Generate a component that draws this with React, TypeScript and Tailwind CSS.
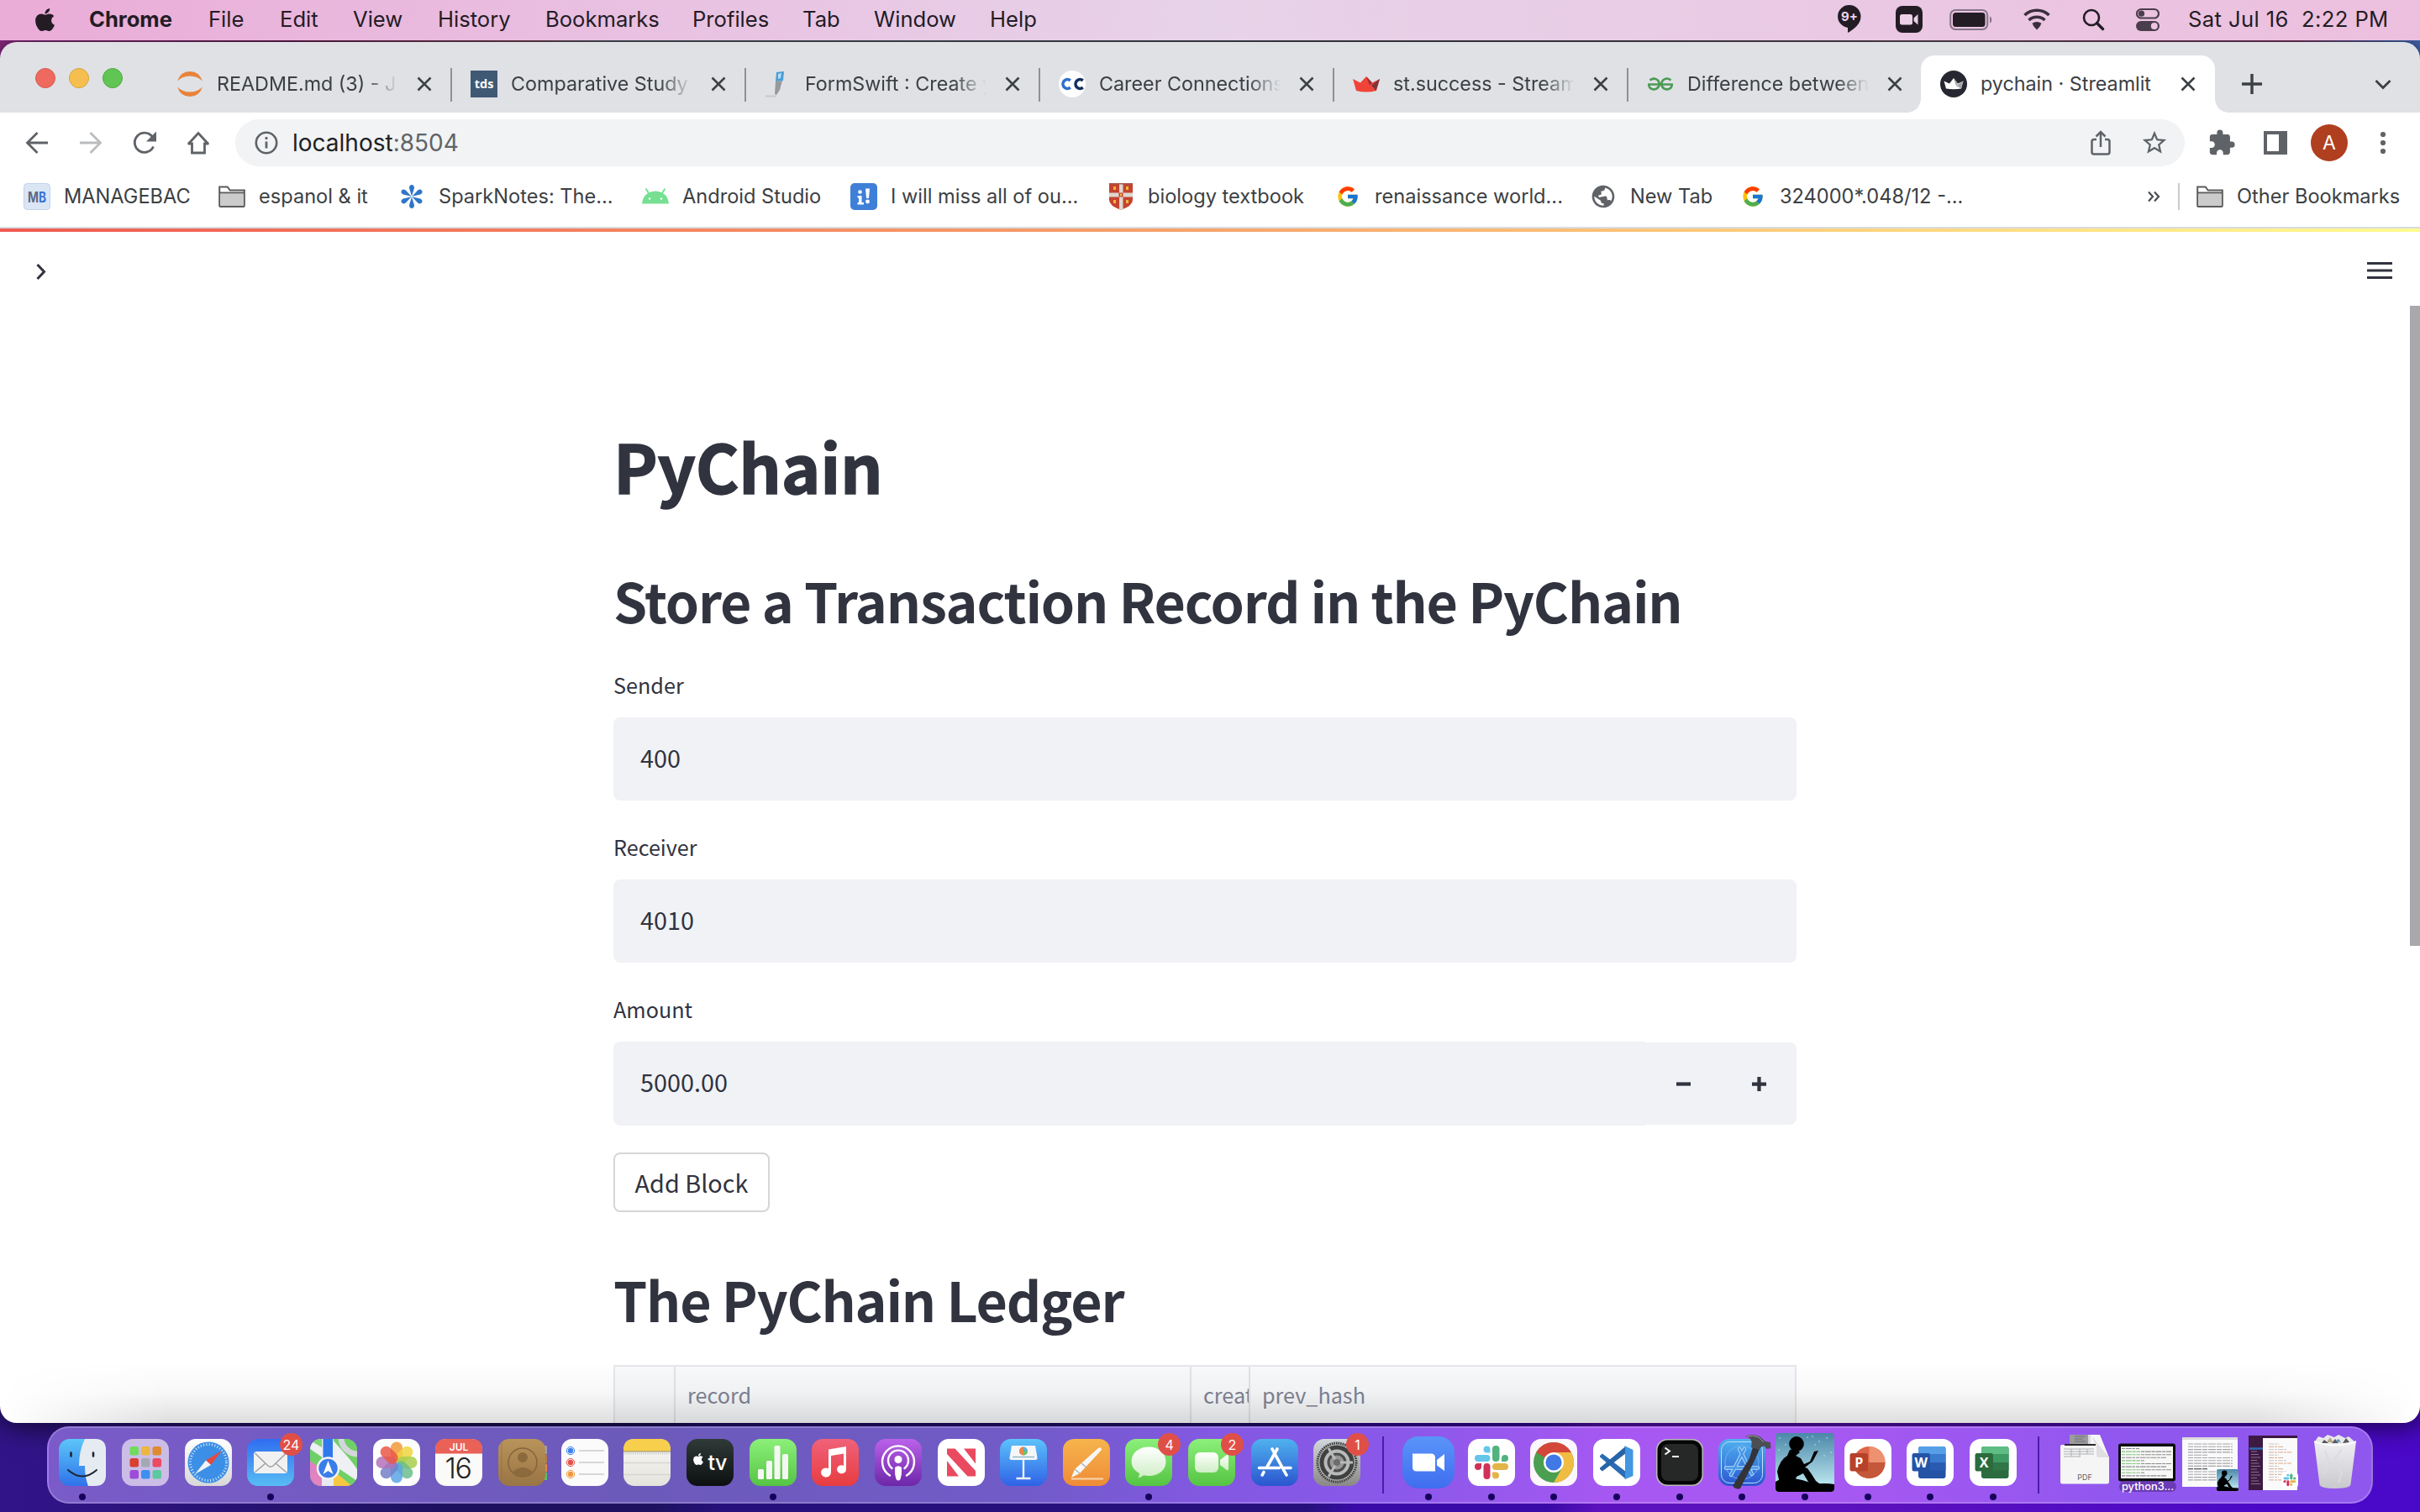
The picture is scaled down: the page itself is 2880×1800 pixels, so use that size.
import type { ReactNode } from "react";
import { FaApple } from "react-icons/fa";
import { FcGoogle } from "react-icons/fc";
import { SiGeeksforgeeks } from "react-icons/si";
import { MdExtension, MdStarBorder, MdPublic } from "react-icons/md";

/* ---------- shared ---------- */

const Svg = ({ children, size = 56, box = 56, className = "" }: { children: ReactNode; size?: number; box?: number; className?: string }) => (
  <svg width={size} height={size} viewBox={`0 0 ${box} ${box}`} fill="none" className={`shrink-0 overflow-visible ${className}`}>
    {children}
  </svg>
);

/* ---------- macOS menu bar ---------- */

const menus = [
  { label: "Chrome", w: "w-[142px] font-bold" },
  { label: "File", w: "w-[85px]" },
  { label: "Edit", w: "w-[87px]" },
  { label: "View", w: "w-[101px]" },
  { label: "History", w: "w-[128px]" },
  { label: "Bookmarks", w: "w-[175px]" },
  { label: "Profiles", w: "w-[131px]" },
  { label: "Tab", w: "w-[85px]" },
  { label: "Window", w: "w-[138px]" },
  { label: "Help", w: "w-[80px]" },
];

function MenuBar() {
  return (
    <header className="relative z-10 flex h-12 shrink-0 items-center bg-linear-to-r from-[#eaacd8] via-[#e7d3e9] to-[#ecbfde] pb-px pr-[37px] text-[25.600px] text-[#231c25]">
      <FaApple className="ml-[38px] mr-[37px] size-[31px] shrink-0" />
      {menus.map((m) => (
        <span key={m.label} className={`shrink-0 whitespace-nowrap ${m.w}`}>{m.label}</span>
      ))}
      <div className="ml-auto flex items-center">
        <Svg size={36} box={36} className="mr-[36px]">
          <path d="M18 1a13.500 13.500 0 0 0-2 26.900V34c7-4 15.500-10 15.500-19.500A13.500 13.500 0 0 0 18 1z" fill="#231c25" />
          <text x="18" y="20" fontSize="15" fontWeight="700" fill="#efd2e8" textAnchor="middle">9+</text>
        </Svg>
        <Svg size={34} box={34} className="mr-[31px]">
          <rect x="1" y="1" width="32" height="32" rx="8" fill="#231c25" />
          <rect x="6" y="11" width="15" height="12.500" rx="2.500" fill="#ecd0e7" />
          <path d="M22.500 15.500l5-4.500v12.500l-5-4.500z" fill="#ecd0e7" />
        </Svg>
        <Svg size={52} box={52} className="-my-3 mr-[35px]">
          <rect x="1.200" y="15" width="44" height="23" rx="6" stroke="#86748a" strokeWidth="2" />
          <rect x="4" y="18" width="38.500" height="17" rx="3.500" fill="#231c25" />
          <path d="M48 22.500c3 .8 3 7.200 0 8z" fill="#86748a" />
        </Svg>
        <Svg size={34} box={34} className="mr-[36px]">
          <path d="M2.500 12a21 21 0 0 1 29 0M7.500 18a14 14 0 0 1 19 0M12.500 23.500a7 7 0 0 1 9 0" stroke="#3a2e3c" strokeWidth="3.600" />
          <path d="M12.500 24.500a7 7 0 0 1 9 0L17 29.500z" fill="#3a2e3c" />
        </Svg>
        <Svg size={28} box={28} className="mr-[36px]">
          <circle cx="12" cy="12" r="9" stroke="#231c25" strokeWidth="2.600" />
          <path d="M18.500 18.500l7 7" stroke="#231c25" strokeWidth="3.400" strokeLinecap="round" />
        </Svg>
        <Svg size={30} box={30} className="mr-[33px]">
          <rect x="2" y="3" width="26" height="10.500" rx="5.250" stroke="#4a3d4c" strokeWidth="2.200" />
          <circle cx="7.500" cy="8.200" r="3.600" fill="#4a3d4c" />
          <rect x="1" y="17" width="28" height="12" rx="6" fill="#4a3d4c" />
          <circle cx="22.800" cy="23" r="4" fill="#ecc6e1" />
        </Svg>
        <span className="w-[239px] whitespace-pre tracking-[0.400px]">Sat Jul 16  2:22 PM</span>
      </div>
    </header>
  );
}

/* ---------- Chrome tab strip ---------- */

const tabs = [
  {
    title: "README.md (3) - Jupyter",
    icon: (
      <Svg size={32} box={32}>
        <path d="M1 12.500Q5 1 16 1t15 11.500Q25 6.500 16 6.500T1 12.500zM1 19.500Q5 31 16 31t15-11.500Q25 25.500 16 25.500T1 19.500z" fill="#e8833a" />
      </Svg>
    ),
  },
  {
    title: "Comparative Study of",
    icon: (
      <Svg size={32} box={32}>
        <rect width="32" height="32" fill="#3f5974" />
        <text x="16" y="21" fontSize="14.500" fontWeight="700" fontFamily="Open Sans" fill="#fff" textAnchor="middle">tds</text>
      </Svg>
    ),
  },
  {
    title: "FormSwift : Create your",
    icon: (
      <Svg size={32} box={32}>
        <path d="M14 2l9-1-1 11-9 1z" fill="#4a9fd6" />
        <path d="M16 4l4-1-1 6-3 1z" fill="#b7dcf1" />
        <path d="M13 13l8-1-3 11-4 6-2-1z" fill="#97999c" />
        <path d="M1 29.500h13v2H1z" fill="#c7c8ca" />
      </Svg>
    ),
  },
  {
    title: "Career Connections",
    icon: (
      <Svg size={32} box={32}>
        <circle cx="16" cy="16" r="16" fill="#fff" />
        <path d="M13.800 11.800a5.400 5.400 0 1 0 0 8.400" stroke="#2f6fd0" strokeWidth="3.600" />
        <path d="M28.800 11.800a5.400 5.400 0 1 0 0 8.400" stroke="#12305f" strokeWidth="3.600" />
      </Svg>
    ),
  },
  {
    title: "st.success - Streamlit",
    icon: (
      <Svg size={32} box={32}>
        <path d="M0 10l9 4.500L16 7l7 7.500 9-4.500-4 14q-12 3-24 0z" fill="#f04438" />
        <path d="M16 7l7 7.500-3 3z" fill="#9a2f35" />
        <path d="M32 10l-10 7.500L27.500 24z" fill="#7d353b" />
      </Svg>
    ),
  },
  {
    title: "Difference between",
    icon: <SiGeeksforgeeks className="size-8 shrink-0 p-px text-[#4c9a55]" />,
  },
  {
    title: "pychain · Streamlit",
    active: true,
    icon: (
      <Svg size={32} box={32}>
        <circle cx="16" cy="16" r="16" fill="#262730" />
        <path d="M4.500 12.500l6.500 3L16 9l5 6.500 6.500-3L25 21.500q-9 1.500-18 0z" fill="#fff" />
        <path d="M16 9l5 6.500-2 2.500zM27.500 12.500L19 18l6 3.500z" fill="#a3a4a9" />
      </Svg>
    ),
  },
];

const Close = () => (
  <Svg size={20} box={20}>
    <path d="M2.500 2.500l15 15M17.500 2.500l-15 15" stroke="#3c4043" strokeWidth="2.600" />
  </Svg>
);

function TabStrip() {
  return (
    <div className="flex h-[84px] shrink-0 items-end bg-[#dfe1e5]">
      <div className="flex h-[68px] w-[187px] shrink-0 items-start gap-4 pl-[42px] pt-[15px]">
        <i className="size-6 rounded-full border border-[#d8594f] bg-[#ee6a5f]" />
        <i className="size-6 rounded-full border border-[#d9a23d] bg-[#f5bf4f]" />
        <i className="size-6 rounded-full border border-[#50a73f] bg-[#61c554]" />
      </div>
      {tabs.map((t, i) => (
        <div
          key={t.title}
          className={`relative flex h-[68px] w-[350px] shrink-0 items-center pl-[23px] ${t.active ? "-ml-px rounded-t-[16px] bg-white" : ""}`}
        >
          {t.icon}
          <span
            className={`ml-4 w-[216px] overflow-hidden whitespace-nowrap text-[23.300px] text-[#3c4043] ${
              t.active ? "" : "[mask-image:linear-gradient(to_right,black_82%,transparent)]"
            }`}
          >
            {t.title}
          </span>
          <span className="ml-[21px]"><Close /></span>
          {!t.active && i < 5 && <i className="absolute right-[-1px] top-[15px] h-10 w-[2px] bg-[#8d9094]" />}
          {t.active && (
            <>
              <i className="absolute -left-4 bottom-0 size-4 bg-[radial-gradient(circle_at_0_0,transparent_15.500px,white_16px)]" />
              <i className="absolute -right-4 bottom-0 size-4 bg-[radial-gradient(circle_at_100%_0,transparent_15.500px,white_16px)]" />
            </>
          )}
        </div>
      ))}
      <div className="flex h-[68px] flex-1 items-center justify-between pl-[32px] pr-[34px]">
        <Svg size={24} box={24}><path d="M12 0v24M0 12h24" stroke="#3c4043" strokeWidth="3.400" /></Svg>
        <Svg size={20} box={20}><path d="M1.500 6l8.500 8.500L18.500 6" stroke="#3c4043" strokeWidth="2.800" /></Svg>
      </div>
    </div>
  );
}

/* ---------- Chrome toolbar ---------- */

function Toolbar() {
  return (
    <div className="flex h-[72px] shrink-0 items-center bg-white">
      <div className="flex w-[280px] shrink-0 items-center gap-8 pl-7">
        <Svg size={32} box={32}><path d="M29 16H5M16.500 4L4.500 16l12 12" stroke="#5f6368" strokeWidth="2.800" /></Svg>
        <Svg size={32} box={32}><path d="M3 16h24M15.500 4l12 12-12 12" stroke="#babcbe" strokeWidth="2.800" /></Svg>
        <Svg size={32} box={32}>
          <path d="M26.500 20.500A11.600 11.600 0 1 1 25 8.500" stroke="#5f6368" strokeWidth="2.900" />
          <path d="M30 2.500v12H18z" fill="#5f6368" />
        </Svg>
        <Svg size={32} box={32}><path d="M3.500 17h5v11h15V17h5M4 17.500L16 4.500l12 13" stroke="#5f6368" strokeWidth="2.800" /></Svg>
      </div>
      <div className="flex h-14 w-[2320px] shrink-0 items-center rounded-full bg-[#f1f3f4] pl-[22px] pr-[19px]">
        <Svg size={30} box={30}>
          <circle cx="15" cy="15" r="12.200" stroke="#5f6368" strokeWidth="2.600" />
          <path d="M15 13.500v8M15 8v3" stroke="#5f6368" strokeWidth="2.800" />
        </Svg>
        <span className="ml-[16px] text-[28px] text-[#202124]">
          localhost<span className="text-[#5f6368]">:8504</span>
        </span>
        <Svg size={32} box={32} className="ml-auto mr-[31px]">
          <path d="M11 12H8q-2.500 0-2.500 2.500v12.500q0 2.500 2.500 2.500h16q2.500 0 2.500-2.500V14.500q0-2.500-2.500-2.500h-3M16 21V3.500M10.500 8.500L16 3l5.500 5.500" stroke="#5f6368" strokeWidth="2.500" />
        </Svg>
        <MdStarBorder className="size-[34px] text-[#5f6368]" />
      </div>
      <MdExtension className="ml-[27px] size-[34px] shrink-0 text-[#5f6368]" />
      <Svg size={28} box={28} className="ml-[33px]">
        <path fillRule="evenodd" d="M0 0h28v28H0zM4 4v20h14V4z" fill="#5f6368" />
      </Svg>
      <div className="ml-[28px] flex size-11 shrink-0 items-center justify-center rounded-full bg-[#af3f1f] text-[23px] text-white">A</div>
      <Svg size={32} box={32} className="ml-[26px]">
        <g fill="#5f6368"><circle cx="16" cy="6" r="3.100" /><circle cx="16" cy="16" r="3.100" /><circle cx="16" cy="26" r="3.100" /></g>
      </Svg>
    </div>
  );
}

/* ---------- bookmarks ---------- */

const Folder = () => (
  <Svg size={32} box={32}>
    <path d="M1.200 27V4.500h9.500l3 4H30.800V27q0 1-1 1H2.200q-1 0-1-1z" fill="#fff" stroke="#5b5b5d" strokeWidth="2" />
    <path d="M2 13h28v14H2z" fill="#cbcbcb" />
    <path d="M1 11.500h30" stroke="#5b5b5d" strokeWidth="2" />
  </Svg>
);

const bookmarks: { label: string; w: string; icon: ReactNode }[] = [
  {
    label: "MANAGEBAC",
    w: "w-[232px]",
    icon: (
      <Svg size={32} box={32}>
        <rect x=".5" y=".5" width="31" height="31" rx="4" fill="#dbe6f5" stroke="#c0d2ec" />
        <text x="5" y="22.500" fontSize="17" fontWeight="700" fill="#5c6a86" textLength="13" lengthAdjust="spacingAndGlyphs">M</text>
        <text x="18" y="22.500" fontSize="17" fontWeight="700" fill="#3b74d6" textLength="9" lengthAdjust="spacingAndGlyphs">B</text>
      </Svg>
    ),
  },
  { label: "espanol & it", w: "w-[214px]", icon: <Folder /> },
  {
    label: "SparkNotes: The...",
    w: "w-[290px]",
    icon: (
      <Svg size={32} box={32}>
        <g fill="#2f76c9">
          {[0, 60, 120, 180, 240, 300].map((a) => (
            <path key={a} d="M16 15.500L13 6q0-4 3-4t3 4z" transform={`rotate(${a} 16 16)`} />
          ))}
        </g>
      </Svg>
    ),
  },
  {
    label: "Android Studio",
    w: "w-[248px]",
    icon: (
      <Svg size={32} box={32}>
        <path d="M0 24.500Q1 15 8 11.500q8-4 16 0 7 3.500 8 13z" fill="#76df92" />
        <path d="M8 12L4.500 6.500M24 12l3.500-5.500" stroke="#76df92" strokeWidth="2" />
        <circle cx="9" cy="18.500" r="1.200" fill="#fff" /><circle cx="23" cy="18.500" r="1.200" fill="#fff" />
      </Svg>
    ),
  },
  {
    label: "I will miss all of ou...",
    w: "w-[306px]",
    icon: (
      <Svg size={32} box={32}>
        <rect width="32" height="32" rx="5" fill="#3f7fd8" />
        <circle cx="11.500" cy="10.500" r="2.300" fill="#fff" />
        <path d="M8.500 15h5v8h2.500v2.500H8.500V23h1.500v-5.500H8.500zM18 6.500h5l-1 11.500h-3z" fill="#fff" />
        <circle cx="20.500" cy="22" r="2.400" fill="#fff" />
      </Svg>
    ),
  },
  {
    label: "biology textbook",
    w: "w-[270px]",
    icon: (
      <Svg size={32} box={32}>
        <path d="M2 0h28v20q0 7-14 12Q2 27 2 20z" fill="#c5432f" />
        <path d="M14 0h4.500v31l-2.500 1-2-1zM2 11.500h28v5H2z" fill="#ddd6d0" />
        <path d="M2 .8h28" stroke="#a2584d" strokeWidth="1.600" />
        <path d="M13.500 11.500h5v5h-5z" fill="#c5432f" />
        <g fill="#f0b63d"><path d="M7 4h3v4H7zM22 4h3v4h-3zM7 20h3v4H7zM22 20h3v4h-3zM15 12.500h2v3h-2z" /></g>
      </Svg>
    ),
  },
  { label: "renaissance world...", w: "w-[304px]", icon: <FcGoogle className="size-8 shrink-0 p-[2px]" /> },
  { label: "New Tab", w: "w-[178px]", icon: <MdPublic className="size-8 shrink-0 -rotate-12 text-[#5f6368]" /> },
  { label: "324000*.048/12 -...", w: "w-[280px]", icon: <FcGoogle className="size-8 shrink-0 p-[2px]" /> },
];

function BookmarksBar() {
  return (
    <div className="flex h-[64px] shrink-0 items-center bg-white pl-7 pb-[8px] text-[23.600px] text-[#3c4043]">
      {bookmarks.map((b) => (
        <div key={b.label} className={`flex shrink-0 items-center gap-[16px] whitespace-nowrap ${b.w}`}>
          {b.icon}
          {b.label}
        </div>
      ))}
      <div className="ml-auto flex items-center pr-[22px]">
        <Svg size={16} box={16} className="mr-[21px]">
          <path d="M2 2.500L7 8l-5 5.500M9 2.500L14 8l-5 5.500" stroke="#4a4d50" strokeWidth="2.200" />
        </Svg>
        <i className="mr-[20px] h-8 w-[2px] bg-[#c9cbce]" />
        <Folder />
        <span className="ml-[16px] w-[196px] whitespace-nowrap">Other Bookmarks</span>
      </div>
    </div>
  );
}

/* ---------- Streamlit page ---------- */

const Field = ({ label, children }: { label: string; children: ReactNode }) => (
  <div className="flex h-[193px] flex-col">
    <label className="flex h-[59px] shrink-0 items-start text-[25.200px] leading-[40px]">{label}</label>
    {children}
  </div>
);

function Page() {
  return (
    <main className="relative flex flex-1 flex-col overflow-hidden bg-white font-['Noto_Sans_CJK_SC','Noto_Sans',sans-serif] text-[#31333f]">
      <div className="h-[2px] shrink-0 bg-[#dadbdd]" />
      <div className="h-1 shrink-0 bg-linear-to-r from-[#ef5a52] via-[#f6a46c] to-[#fdfb8f]" />
      <div className="flex h-[92px] shrink-0 items-center justify-between pl-[36px] pr-[33px]">
        <Svg size={24} box={24}><path d="M8.500 5l8 8.500-8 8.500" stroke="#31333f" strokeWidth="3" /></Svg>
        <Svg size={30} box={30}><path d="M0 6.500h30M0 15h30M0 23.500h30" stroke="#31333f" strokeWidth="3" /></Svg>
      </div>
      <div className="ml-[730px] flex w-[1408px] flex-col pt-[136px]">
        <h1 className="h-[160px] whitespace-nowrap text-[79.200px] font-bold leading-[100px] tracking-[-0.300px] [-webkit-text-stroke:1.400px_#31333f]">PyChain</h1>
        <h2 className="h-[131px] whitespace-nowrap text-[64.500px] font-bold leading-[100px] tracking-[-1.220px]">
          Store a Transaction Record in the PyChain
        </h2>
        <Field label="Sender">
          <div className="h-[99px] rounded-lg bg-[#f0f2f6] pl-8 text-[28.800px] leading-[95px]">400</div>
        </Field>
        <Field label="Receiver">
          <div className="h-[99px] rounded-lg bg-[#f0f2f6] pl-8 text-[28.800px] leading-[95px]">4010</div>
        </Field>
        <Field label="Amount">
          <div className="flex h-[100px] shrink-0 items-center">
            <div className="h-[100px] w-[1228px] rounded-l-lg bg-[#f0f2f6] pl-8 text-[28.800px] leading-[95px]">5000.00</div>
            <div className="flex h-[98px] w-[180px] items-center gap-[73px] rounded-r-lg bg-[#f0f2f6] pl-[37px]">
              <Svg size={17} box={16}><path d="M0 8h16" stroke="#31333f" strokeWidth="4" /></Svg>
              <Svg size={17} box={16}><path d="M0 8h16M8 0v16" stroke="#31333f" strokeWidth="4" /></Svg>
            </div>
          </div>
        </Field>
        <button className="-mt-[2px] mb-[53px] h-[71px] w-[186px] self-start rounded-lg border-2 border-[#d6d6d9] bg-white text-[28.800px] leading-[62px]">Add Block</button>
        <h2 className="h-[129px] shrink-0 whitespace-nowrap text-[64.500px] font-bold leading-[100px] tracking-[-1.220px]">The PyChain Ledger</h2>
        <div className="grid h-[90px] shrink-0 grid-cols-[72px_614px_70px_652px] border-2 border-b-0 border-[#e6e7ea] bg-[#f8f9fb] text-[25.200px] leading-[66px] text-[#808495] *:overflow-hidden *:border-r-2 *:border-[#e2e3e6]">
          <div />
          <div className="pl-[14px]">record</div>
          <div className="pl-[14px]">created</div>
          <div className="border-r-0! pl-[14px]">prev_hash</div>
        </div>
      </div>
      <i className="absolute right-0 top-[94px] h-[762px] w-[12px] bg-[#a9a9ad]" />
      <i className="absolute inset-x-0 bottom-0 h-[72px] bg-linear-to-b from-transparent via-black/3 to-black/13 [mask-image:linear-gradient(to_right,transparent,black_7%,black_93%,transparent)]" />
    </main>
  );
}

/* ---------- dock ---------- */

type App = { id: string; art: ReactNode; dot?: boolean; badge?: string };

const Tile = ({ fill }: { fill: string }) => <rect width="56" height="56" rx="13" fill={fill} />;

const Defs = () => (
  <svg width="0" height="0" className="absolute">
    <defs>
      {[
        ["finder", "#5cc6f8", "#2f73ea"],
        ["mail", "#2f6df0", "#58bdf4"],
        ["green", "#8cf07a", "#55c443"],
        ["red", "#f0627a", "#e73c40"],
        ["purple", "#bb62ea", "#6d27a8"],
        ["blue", "#5cc2fb", "#2f62e6"],
        ["orange", "#f6b54d", "#ef8b36"],
        ["store", "#4fb2ee", "#2b55d0"],
        ["zoom", "#5a95f9", "#3f6df0"],
        ["grey", "#d3d8dd", "#8a8885"],
        ["tv", "#2f3a38", "#0d1011"],
        ["white", "#ffffff", "#d8d8d8"],
        ["contact", "#b8935a", "#9a7545"],
        ["cream", "#f8f8f6", "#e4e3dc"],
        ["bubble", "#ffffff", "#cfeec5"],
        ["sky", "#4b87a8", "#c8f2f8"],
        ["bin", "#efeff2", "#c9c9cd"],
      ].map(([id, a, b]) => (
        <linearGradient key={id} id={id} x1="0" y1="0" x2="0" y2="1">
          <stop stopColor={a} />
          <stop offset="1" stopColor={b} />
        </linearGradient>
      ))}
      <clipPath id="tile"><rect width="56" height="56" rx="13" /></clipPath>
    </defs>
  </svg>
);

const Reader = () => (
  <g>
    <g fill="#dff3f8">
      {[[5, 6], [12, 14], [4, 20], [44, 4], [52, 10], [61, 6], [66, 23], [58, 27], [38, 5], [47, 14]].map(([x, y]) => (
        <circle key={`${x}-${y}`} cx={x} cy={y} r=".7" />
      ))}
    </g>
    <g fill="#000">
      <ellipse cx="25" cy="13" rx="8.800" ry="9" />
      <path d="M17 20l8-1 4 4-5 4 6 3 4 7 7-3 5-12 5-1-7 13-4 3-5 4 3 1 5 7 5 8 8 6-13 2-10-17-8 4-2 6-9 5-9-3-3-14Q5 32 14 27z" />
      <path d="M0 70V58q9-5 18-4 16 1 27 7 14-2 25 0v5q0 4-4 4H4q-4 0-4-4z" />
    </g>
  </g>
);

const SlackMark = () => (
  <g>
    <g fill="#65c5ea"><rect x="8" y="19" width="18.500" height="8" rx="4" /><path d="M26.500 16.500h-4a4 4 0 1 1 4-4z" /></g>
    <g fill="#53b27e"><rect x="29" y="8" width="8.500" height="19" rx="4" /><path d="M40 27v-4a4 4 0 1 1 4 4z" /></g>
    <g fill="#e2b549"><rect x="29" y="29" width="19" height="8" rx="4" /><path d="M29 39.500h4a4 4 0 1 1-4 4z" /></g>
    <g fill="#cf3157"><rect x="18.500" y="29" width="8" height="19" rx="4" /><path d="M16 29v4a4 4 0 1 1-4-4z" /></g>
  </g>
);

const Office = ({ letter, a, b, c, d, round }: { letter: string; a: string; b: string; c: string; d: string; round?: boolean }) => (
  <Svg>
    <Tile fill="#fff" />
    {round ? (
      <g>
        <circle cx="29.500" cy="28" r="19" fill={b} />
        <path d="M29.500 9a19 19 0 0 1 19 19h-19z" fill={a} />
        <path d="M10.500 28h38a19 19 0 0 1-38 0z" fill={c} />
      </g>
    ) : (
      <g>
        <rect x="14" y="9" width="32.500" height="38" rx="3" fill={d} />
        <path d="M14 18.500V12q0-3 3-3h26.500q3 0 3 3v6.500z" fill={a} />
        <path d="M14 18.500h32.500V28H14z" fill={b} />
        <path d="M14 28h32.500v9.500H14z" fill={c} />
      </g>
    )}
    <rect x="6.500" y="17" width="21.500" height="21.500" rx="2.500" fill={d} />
    <text x="17.200" y="33.500" fontSize="16" fontWeight="700" fill="#fff" textAnchor="middle" fontFamily="Open Sans">{letter}</text>
  </Svg>
);

const lines = (n: number) => Array.from({ length: n }, (_, i) => i);

const mainApps: App[] = [
  {
    id: "Finder",
    dot: true,
    art: (
      <Svg>
        <Tile fill="url(#finder)" />
        <path d="M31 0q-7 14-7 32h7q0 14 4 24h8q13 0 13-13V13Q56 0 43 0z" fill="#e6ebf2" />
        <path d="M14.500 16.500v4M41 16.500v4" stroke="#1c2735" strokeWidth="2.600" strokeLinecap="round" />
        <path d="M11 37q17 15 34 0" stroke="#1c2735" strokeWidth="2" strokeLinecap="round" />
      </Svg>
    ),
  },
  {
    id: "Launchpad",
    art: (
      <Svg>
        <Tile fill="#cbbde6" />
        {["#6fdc5b", "#efb53f", "#e08a32", "#d9402f", "#a3a9b2", "#ea4a62", "#9d4bd8", "#3f8fee", "#5cc89e"].map((f, i) => (
          <rect key={f} x={9.500 + (i % 3) * 13.500} y={9 + Math.floor(i / 3) * 14} width="10.500" height="10.500" rx="2.500" fill={f} />
        ))}
      </Svg>
    ),
  },
  {
    id: "Safari",
    art: (
      <Svg>
        <Tile fill="url(#white)" />
        <circle cx="28" cy="28" r="24.500" fill="#3c8fe6" />
        <circle cx="28" cy="28" r="21.500" stroke="#d9ecfb" strokeWidth="3" strokeDasharray="1 2.380" />
        <path d="M44 14L25 25.500l6 5.500z" fill="#e6483d" />
        <path d="M12 42l13-16.500 6 5.500z" fill="#f1f3f5" />
      </Svg>
    ),
  },
  {
    id: "Mail",
    dot: true,
    badge: "24",
    art: (
      <Svg>
        <Tile fill="url(#mail)" />
        <rect x="8" y="15" width="40" height="26" rx="3.500" fill="#f1f1f2" />
        <path d="M9.500 17l15.500 15q3 2.500 6 0l15.500-15M9.500 39.500L22 29M46.500 39.500L34 29" stroke="#9d9ea2" strokeWidth="1.400" />
      </Svg>
    ),
  },
  {
    id: "Maps",
    art: (
      <Svg>
        <g clipPath="url(#tile)">
          <path d="M0 0h56v56H0z" fill="#6fd068" />
          <path d="M0 12l56 38v-16L26 0H0z" fill="#eff0f3" />
          <path d="M0 0h14v10L0 2z" fill="#7ad671" />
          <path d="M0 26l16 12v18H0z" fill="#e083c0" />
          <path d="M28 56V38l22 18z" fill="#f6c944" />
          <path d="M30 0h26v36z" fill="#6fd068" />
          <path d="M37-3a20 20 0 0 0 22 21" stroke="#d3d6da" strokeWidth="7" />
          <path d="M14 0h14v56H14z" fill="#e9eaee" />
          <path d="M15.500 0h11.500v30H15.500z" fill="#3079ea" />
        </g>
        <circle cx="21.500" cy="35" r="12.500" fill="#3a7de9" stroke="#f2f3f6" strokeWidth="2.500" />
        <path d="M21.500 26l6 16-6-4-6 4z" fill="#fff" />
      </Svg>
    ),
  },
  {
    id: "Photos",
    art: (
      <Svg>
        <Tile fill="#fdfdfd" />
        {["#f39a3a", "#eed53d", "#a8cf4c", "#6bbd8d", "#5aa6e6", "#7480c8", "#b172b8", "#ea5748"].map((f, i) => (
          <rect key={f} x="21" y="3.500" width="14" height="24" rx="7" fill={f} fillOpacity=".85" transform={`rotate(${i * 45} 28 28)`} />
        ))}
      </Svg>
    ),
  },
  {
    id: "Calendar",
    art: (
      <Svg>
        <Tile fill="#fafaf9" />
        <path d="M0 17.500V13Q0 0 13 0h30q13 0 13 13v4.500z" fill="#e96157" />
        <text x="28" y="13.500" fontSize="12" fontWeight="600" fill="#fff" textAnchor="middle">JUL</text>
        <text x="27" y="47" fontSize="34" fontWeight="300" fill="#242426" textAnchor="middle" letterSpacing="-1.500">16</text>
      </Svg>
    ),
  },
  {
    id: "Contacts",
    art: (
      <Svg>
        <path d="M54 8h3q1 0 1 1v9h-4z" fill="#9da1a6" /><path d="M54 19h4v10h-4z" fill="#b9783a" /><path d="M54 30h4v9h-4z" fill="#e8873a" /><path d="M54 40h4v9h-4z" fill="#5cc35a" />
        <Tile fill="url(#contact)" />
        <path d="M4 2v52" stroke="#8f6d3d" strokeWidth="1" opacity=".6" />
        <circle cx="29" cy="28" r="17" stroke="#86653a" strokeWidth="1.500" />
        <circle cx="29" cy="22" r="6" fill="#8b6a3d" />
        <path d="M17 39.500q12-11 24 0-12 11-24 0z" fill="#8b6a3d" />
      </Svg>
    ),
  },
  {
    id: "Reminders",
    art: (
      <Svg>
        <Tile fill="#fbfbfb" />
        {["#3c82ee", "#e3524a", "#ee9a3c"].map((f, i) => (
          <g key={f}>
            <circle cx="11" cy={14 + i * 14} r="3.200" fill={f} />
            <circle cx="11" cy={14 + i * 14} r="4.600" stroke={f} strokeWidth="1" />
            <path d={`M21 ${14 + i * 14}h30`} stroke="#cfcfd3" strokeWidth="1.600" />
          </g>
        ))}
      </Svg>
    ),
  },
  {
    id: "Notes",
    art: (
      <Svg>
        <Tile fill="url(#cream)" />
        <path d="M0 15V13Q0 0 13 0h30q13 0 13 13v2z" fill="#f8cf4c" />
        <path d="M0 15h56" stroke="#8e8a7c" strokeWidth="1" />
        <path d="M1 17.500h54" stroke="#c2c1bb" strokeWidth="2" strokeDasharray="1 1.500" />
        <path d="M0 28.500h56M0 42.500h56" stroke="#d7d6d1" strokeWidth="1.300" />
      </Svg>
    ),
  },
  {
    id: "TV",
    art: (
      <Svg>
        <Tile fill="url(#tv)" />
        <FaApple x={6} y={16} width={21} height={21} color="#fff" />
        <text x="25.500" y="36.500" fontSize="25" fontWeight="500" fill="#fff" letterSpacing="-.5">tv</text>
      </Svg>
    ),
  },
  {
    id: "Numbers",
    dot: true,
    art: (
      <Svg>
        <Tile fill="url(#green)" />
        <g fill="#f4f7f3">
          <rect x="10" y="36" width="7" height="12" rx="1.500" /><rect x="20" y="26" width="7" height="22" rx="1.500" />
          <rect x="29.500" y="8" width="7" height="40" rx="1.500" /><rect x="39" y="18" width="7" height="30" rx="1.500" />
        </g>
      </Svg>
    ),
  },
  {
    id: "Music",
    art: (
      <Svg>
        <Tile fill="url(#red)" />
        <path d="M20 12.500L41 9v27.500a5.500 5 0 1 1-3-4.700V17.500L23 20v20a6 5.500 0 1 1-3-4.800z" fill="#fff" />
      </Svg>
    ),
  },
  {
    id: "Podcasts",
    art: (
      <Svg>
        <Tile fill="url(#purple)" />
        <g stroke="#fff" strokeWidth="2.400" strokeLinecap="round">
          <path d="M18 43.500a19 19 0 1 1 20 0M20.500 35a12 12 0 1 1 15 0" />
        </g>
        <circle cx="28" cy="24.500" r="4.500" fill="#fff" />
        <path d="M24 34q4-3.500 8 0 .6 8-1.500 14-2.500 3-5 0Q23.500 42 24 34z" fill="#fff" />
      </Svg>
    ),
  },
  {
    id: "News",
    art: (
      <Svg>
        <Tile fill="#fff" />
        <path d="M11 11.500h9.500L45 38v6.500H35.500L11 18z" fill="#e94a5f" />
        <path d="M31 11.500h14v18zM11 26v18.500h14z" fill="#e94a5f" />
      </Svg>
    ),
  },
  {
    id: "Keynote",
    art: (
      <Svg>
        <Tile fill="url(#blue)" />
        <path d="M14 8h28l2.500 14q.4 3-2.500 3H14q-3 0-2.500-3z" fill="#f4f6f8" />
        <path d="M15 21.500h26" stroke="#8eb3c9" strokeWidth="1.300" />
        <circle cx="28" cy="14.500" r="5" fill="#58b2dc" /><path d="M28 9.500a5 5 0 0 0 0 10z" fill="#ea884a" /><path d="M28 14.500h5a5 5 0 0 1-5 5z" fill="#6cc35a" />
        <path d="M28 25v21M19.500 47h17" stroke="#eef1f4" strokeWidth="2.400" />
      </Svg>
    ),
  },
  {
    id: "Pages",
    art: (
      <Svg>
        <Tile fill="url(#orange)" />
        <path d="M10 46l4-10L42 11q4-2 4 2L20 41z" fill="#f7f7f7" />
        <path d="M14 36l6 5M22 29l6 5" stroke="#a9a9aa" strokeWidth="1.200" />
        <path d="M10 47.500h38" stroke="#f9d6ab" strokeWidth="2" />
      </Svg>
    ),
  },
  {
    id: "Messages",
    dot: true,
    badge: "4",
    art: (
      <Svg>
        <Tile fill="url(#green)" />
        <path d="M28 9.500c12 0 20.500 7.500 20.500 17.500S40 44 28 44q-3 0-6-.7-3 2.700-6.500 3.200 1.500-2.500 1.500-5.500Q7.500 36 7.500 27C7.500 17 16 9.500 28 9.500z" fill="url(#bubble)" />
      </Svg>
    ),
  },
  {
    id: "FaceTime",
    badge: "2",
    art: (
      <Svg>
        <Tile fill="url(#green)" />
        <rect x="8" y="16" width="28" height="24" rx="6" fill="url(#bubble)" />
        <path d="M38 25l8.500-6.500q1.500 0 1.500 2v15q0 2-1.500 2L38 31z" fill="url(#bubble)" />
      </Svg>
    ),
  },
  {
    id: "App Store",
    art: (
      <Svg>
        <Tile fill="url(#store)" />
        <path d="M25 12l14.500 26.500M31 12L18.500 34M9.500 34.500h24M39 34.500h8M15 39.500l-1.800 3.500M39.500 38.500l2.500 4.500" stroke="#fff" strokeWidth="3.600" strokeLinecap="round" />
      </Svg>
    ),
  },
  {
    id: "System Preferences",
    badge: "1",
    art: (
      <Svg>
        <Tile fill="url(#grey)" />
        <circle cx="28" cy="28" r="23" fill="#b9bab9" stroke="#3b3c3c" strokeWidth="3" strokeDasharray="1.600 1" />
        <circle cx="28" cy="28" r="18" stroke="#3f4040" strokeWidth="5" />
        <circle cx="28" cy="28" r="10" fill="#969796" stroke="#4b4c4c" strokeWidth="3" />
        <path d="M28 28h19M28 28l-10-17M28 28L18 45" stroke="#b9bab9" strokeWidth="3" />
        <circle cx="28" cy="28" r="4" fill="#6b6c6b" />
      </Svg>
    ),
  },
];

const openApps: App[] = [
  {
    id: "Zoom",
    dot: true,
    art: (
      <Svg>
        <rect x="-3" y="-3" width="62" height="62" rx="19" fill="url(#zoom)" />
        <path d="M9 17.500h22q5 0 5 5v16H14q-5 0-5-5zM38 25l9-7v20l-9-6.500z" fill="#fff" />
      </Svg>
    ),
  },
  { id: "Slack", dot: true, art: <Svg><Tile fill="#fff" /><SlackMark /></Svg> },
  {
    id: "Chrome",
    dot: true,
    art: (
      <Svg>
        <Tile fill="#fbf6fc" />
        <circle cx="28" cy="28" r="24" fill="#4a9f50" />
        <path d="M28 28L7.200 16A24 24 0 0 1 48.800 16z" fill="#d5463a" />
        <path d="M28 16h20.800A24 24 0 0 1 28 52l10.400-18z" fill="#f0bd42" />
        <circle cx="28" cy="28" r="12" fill="#fff" /><circle cx="28" cy="28" r="9.600" fill="#4079e6" />
      </Svg>
    ),
  },
  {
    id: "VS Code",
    dot: true,
    art: (
      <Svg>
        <Tile fill="#fff" />
        <path d="M8 20l3-2.500 28 21.500v9L8 21.500z" fill="#2b6cb5" />
        <path d="M8 36l3 2.500L39 17V8.500L8 34.500z" fill="#2664a8" />
        <path d="M37 8l10.500 5v31L37 48.500q1 0 1-2V10z" fill="#4296e2" />
      </Svg>
    ),
  },
  {
    id: "Terminal",
    dot: true,
    art: (
      <Svg>
        <Tile fill="#b8bab8" />
        <rect x="1.500" y="1.500" width="53" height="53" rx="12" fill="#050505" />
        <rect x="6" y="6" width="44" height="44" rx="8" fill="#262727" />
        <path d="M10.500 10.500l5.500 4-5.500 4M19 21h8" stroke="#fff" strokeWidth="1.900" />
      </Svg>
    ),
  },
  {
    id: "Xcode",
    dot: true,
    art: (
      <Svg>
        <Tile fill="url(#store)" />
        <rect x="3.500" y="3.500" width="49" height="49" rx="10" stroke="#bfe0fb" strokeWidth="1" />
        <circle cx="28" cy="28" r="20" stroke="#6fb4f0" strokeWidth="1" />
        <path d="M25 12l15 30M31 12L15 43M9 34.500h38" stroke="#b5dcfb" strokeWidth="4.400" strokeLinecap="round" />
        <path d="M25 12l15 30M31 12L15 43M9 34.500h38" stroke="#4a97e6" strokeWidth="2.600" strokeLinecap="round" />
        <path d="M37 23l4-13 8 2-6 14-17 33q-5 2-9-3z" fill="#33343a" />
        <path d="M32-3q8-4 17 0l7 6 6 1 .5 7-4.500 1-3-3q-4-1-6 4l-10-3q3-11-7-13z" fill="#4b4e52" />
        <path d="M34-3q8-2 14 1l6 6" stroke="#9a9da1" strokeWidth="1" />
      </Svg>
    ),
  },
  {
    id: "Kindle",
    dot: true,
    art: (
      <Svg size={70} box={70} className="-mt-[7px] mb-[-7px]">
        <rect width="70" height="70" rx="4" fill="url(#sky)" />
        <Reader />
      </Svg>
    ),
  },
  { id: "PowerPoint", dot: true, art: <Office letter="P" a="#ee9170" b="#dd6648" c="#c5573a" d="#b7412a" round /> },
  { id: "Word", dot: true, art: <Office letter="W" a="#569fe6" b="#3a7bd0" c="#2a5bb3" d="#2453a6" /> },
  { id: "Excel", dot: true, art: <Office letter="X" a="#5dbd83" b="#3f9b64" c="#2f7648" d="#2b6b3d" /> },
];

const files: App[] = [
  {
    id: "PDF",
    art: (
      <Svg>
        <path d="M10-5h36v26H10z" fill="#dcdcde" /><path d="M10-5h22v11H10z" fill="#9b9ca0" />
        <path d="M16-3h13M16 0h10M16 3h13" stroke="#6d6e72" strokeWidth="1" />
        <path d="M-1 9q0-2 2-2h34V-5h11l11 27v29q0 2.500-2.500 2.500H1.500Q-1 53.500-1 51z" fill="#f5f5f6" />
        <path d="M4 7h37" stroke="#2a2a2c" strokeWidth="2" />
        <path d="M35-5l22 27H45q-3 0-3-3V8z" fill="#dfdfe2" />
        <path d="M3 12h36M3 15h36M3 18h36M3 21h20M12 12v9M22 12v9M31 12v6" stroke="#a9aaad" strokeWidth=".9" />
        <text x="28" y="48.500" fontSize="9" fill="#626266" textAnchor="middle">PDF</text>
      </Svg>
    ),
  },
  {
    id: "Terminal window",
    art: (
      <Svg>
        <rect x="-6" y="5.500" width="68" height="45" rx="3" fill="#0c0d0e" />
        <rect x="-3" y="9" width="62" height="38" fill="#f7f7f6" />
        {lines(10).map((i) => (
          <g key={i} strokeWidth="1.100" strokeDasharray="4 .8 7 .8">
            <path d={`M-2 ${11.500 + i * 3.600}h${i % 3 ? 22 : 16}`} stroke={i % 3 ? "#85c47d" : "#8c8c8f"} />
            <path d={`M${i % 3 ? 21 : 15} ${11.500 + i * 3.600}h${i % 4 ? 36 : 4}`} stroke="#8c8c8f" />
          </g>
        ))}
        <rect x="-5" y="50.500" width="68" height="12.500" rx="6.250" fill="#6b3bb5" />
        <text x="29" y="60.500" fontSize="12.800" fontWeight="500" fill="#fff" textAnchor="middle">python3...</text>
      </Svg>
    ),
  },
  {
    id: "Kindle window",
    art: (
      <Svg>
        <rect x="-5" y="-2" width="66" height="59" fill="#fafafb" />
        <path d="M-5-2h66v3h-66z" fill="#dcdade" />
        {lines(14).map((i) => (
          <path key={i} d={`M2 ${6 + i * 3.300}h${i % 5 === 4 ? 24 : 53}`} stroke={i === 9 ? "#2a2a2c" : "#a4a4a8"} strokeWidth="1.100" strokeDasharray="6 1 9 1" />
        ))}
        <g transform="translate(36 36) scale(.37)"><rect width="70" height="70" rx="6" fill="url(#sky)" /><Reader /></g>
      </Svg>
    ),
  },
  {
    id: "Slack window",
    art: (
      <Svg>
        <path d="M-1-4h58v65H-1z" fill="#fafafa" /><path d="M-1-4h58v3H-1z" fill="#3b1640" /><path d="M-1-4h17v65H-1z" fill="#3c1a42" />
        <path d="M0 11.500h16" stroke="#2f6db5" strokeWidth="2.400" />
        {lines(12).map((i) => (
          <path key={i} d={`M2 ${15 + i * 3.500}h${7 + (i % 3) * 2}`} stroke="#8a6f90" strokeWidth="1" />
        ))}
        {lines(14).map((i) => (
          <path key={i} d={`M23 ${6 + i * 3.300}h${12 + (i % 4) * 5}`} stroke={i % 2 ? "#d9a98a" : "#c4c4c8"} strokeWidth="1" strokeDasharray="6 1 3 1" />
        ))}
        <rect x="38" y="39" width="20" height="20" rx="5" fill="#fff" />
        <g transform="translate(37.500 38.500) scale(.37)"><SlackMark /></g>
      </Svg>
    ),
  },
  {
    id: "Trash",
    art: (
      <Svg>
        <path d="M4 3l4-6 6 2 5-4 8 3 5-3 8 4 4-2 7 6q-23 11-47 0z" fill="#e8e8ea" />
        <path d="M12 5l3-4 5 4zM24 5l4-5 4 5zM37 5l4-6 4 5z" fill="#55565b" />
        <path d="M18 4l4-6 4 6z" fill="#b7a58c" /><path d="M28 3l4-3 3 4z" fill="#5f8fae" />
        <path d="M3 3q25 9 50 0l-6.500 51Q46 59 28 59T9.500 54z" fill="url(#bin)" />
        <path d="M3 3q25 9 50 0" stroke="#fff" strokeWidth="1.500" />
        <path d="M16 14l6 16-8 12M36 12l-10 14 10 14-4 12" stroke="#dcdce0" strokeWidth="2" />
      </Svg>
    ),
  },
];

const Slot = ({ app }: { app: App }) => (
  <div className="relative flex w-[74.670px] shrink-0 flex-col items-center pt-[13px]">
    {app.art}
    {app.dot && <i className="mt-[9px] size-2 rounded-full bg-[#16005c]" />}
    {app.badge && (
      <span className="absolute left-[48px] top-[6px] flex size-[27px] items-center justify-center rounded-full bg-[#e04f47] text-[16px] text-white">
        {app.badge}
      </span>
    )}
  </div>
);

const Divider = () => <i className="mx-[16px] mt-[10px] h-[68px] w-[2px] shrink-0 bg-[#4c1cae]" />;

function Dock() {
  return (
    <nav className="mx-[56px] mt-1 flex h-[92px] shrink-0 rounded-[26px] border-2 border-white/20 bg-[linear-gradient(to_right,#7a5bc9_0%,#6c5aba_25%,#715bc8_42%,#8358e2_50%,#8a58ea_58%,#a858f2_68%,#a858f2_76%,#8f57ee_90%,#8f57ee_100%)] pl-[3px]">
      {mainApps.map((a) => <Slot key={a.id} app={a} />)}
      <Divider />
      {openApps.map((a) => <Slot key={a.id} app={a} />)}
      <Divider />
      {files.map((a) => <Slot key={a.id} app={a} />)}
    </nav>
  );
}

export default function App() {
  return (
    <div className="flex h-[1800px] w-[2880px] flex-col overflow-hidden bg-[linear-gradient(to_right,#9c2f92_0%,#7a2460_12%,#7f4a5c_22%,#5d6474_25%,#4f4d5a_60%,#6c5566_80%,#8c3f70_95%,#4f74c8_99%),linear-gradient(to_right,#32148a_0%,#1e1260_18%,#1e1260_27%,#26117c_30%,#26117c_54%,#3a0aa8_56%,#3a0aa8_64%,#5c12bc_66%,#5c12bc_76%,#4a08c8_95%)] bg-[length:100%_120px,100%_100%] bg-no-repeat font-['Inter',sans-serif]">
      <Defs />
      <MenuBar />
      <div className="mt-[2px] flex h-[1644px] shrink-0 flex-col overflow-hidden rounded-[20px] shadow-[0_0_30px_6px_rgba(0,0,0,0.6)]">
        <TabStrip />
        <Toolbar />
        <BookmarksBar />
        <Page />
      </div>
      <Dock />
    </div>
  );
}
